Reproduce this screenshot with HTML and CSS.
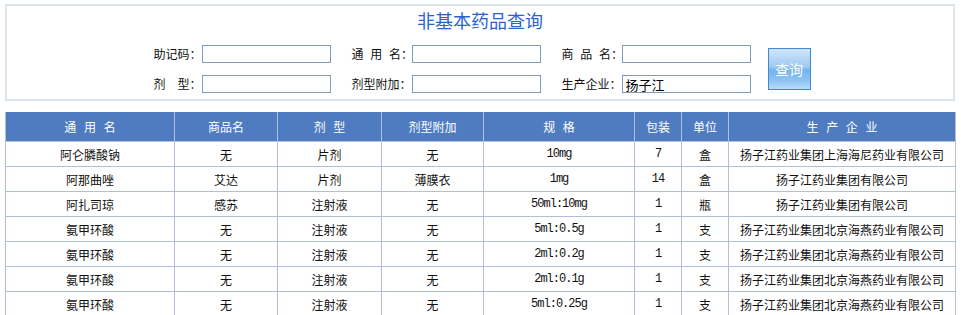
FILE: index.html
```html
<!DOCTYPE html>
<html lang="zh-CN">
<head>
<meta charset="utf-8">
<title>非基本药品查询</title>
<link rel="stylesheet" href="styles.css">
</head>
<body>
<div class="page">
  <div class="search-box">
    <h1 class="title">非基本药品查询</h1>
    <form class="search-form">
      <div class="fields">
        <label class="field"><span class="label">助记码：</span><input class="input" type="text"></label>
        <label class="field"><span class="label spaced">通 用 名：</span><input class="input" type="text"></label>
        <label class="field"><span class="label spaced">商 品 名：</span><input class="input" type="text"></label>
        <label class="field"><span class="label">剂　型：</span><input class="input" type="text"></label>
        <label class="field"><span class="label">剂型附加：</span><input class="input" type="text"></label>
        <label class="field"><span class="label">生产企业：</span><input class="input" type="text" value="扬子江"></label>
      </div>
      <button class="search-btn" type="button">查询</button>
    </form>
  </div>

  <table class="result">
    <colgroup>
      <col class="c1"><col class="c2"><col class="c3"><col class="c4"><col class="c5"><col class="c6"><col class="c7"><col class="c8">
    </colgroup>
    <thead>
      <tr>
        <th class="spaced-h">通 用 名</th>
        <th>商品名</th>
        <th class="spaced-h">剂 型</th>
        <th>剂型附加</th>
        <th class="spaced-h">规 格</th>
        <th>包装</th>
        <th>单位</th>
        <th class="spaced-h">生 产 企 业</th>
      </tr>
    </thead>
    <tbody>
      <tr><td>阿仑膦酸钠</td><td>无</td><td>片剂</td><td>无</td><td class="mono">10mg</td><td class="mono">7</td><td>盒</td><td>扬子江药业集团上海海尼药业有限公司</td></tr>
      <tr><td>阿那曲唑</td><td>艾达</td><td>片剂</td><td>薄膜衣</td><td class="mono">1mg</td><td class="mono">14</td><td>盒</td><td>扬子江药业集团有限公司</td></tr>
      <tr><td>阿扎司琼</td><td>感苏</td><td>注射液</td><td>无</td><td class="mono">50ml:10mg</td><td class="mono">1</td><td>瓶</td><td>扬子江药业集团有限公司</td></tr>
      <tr><td>氨甲环酸</td><td>无</td><td>注射液</td><td>无</td><td class="mono">5ml:0.5g</td><td class="mono">1</td><td>支</td><td>扬子江药业集团北京海燕药业有限公司</td></tr>
      <tr><td>氨甲环酸</td><td>无</td><td>注射液</td><td>无</td><td class="mono">2ml:0.2g</td><td class="mono">1</td><td>支</td><td>扬子江药业集团北京海燕药业有限公司</td></tr>
      <tr><td>氨甲环酸</td><td>无</td><td>注射液</td><td>无</td><td class="mono">2ml:0.1g</td><td class="mono">1</td><td>支</td><td>扬子江药业集团北京海燕药业有限公司</td></tr>
      <tr><td>氨甲环酸</td><td>无</td><td>注射液</td><td>无</td><td class="mono">5ml:0.25g</td><td class="mono">1</td><td>支</td><td>扬子江药业集团北京海燕药业有限公司</td></tr>
    </tbody>
  </table>
</div>
</body>
</html>
```

FILE: styles.css
```css
html, body {
  margin: 0;
  padding: 0;
  background: #ffffff;
}

body {
  font-family: "Noto Sans CJK SC", "Noto Sans", sans-serif;
  font-size: 12px;
  color: #000;
}

.page {
  width: 950px;
  padding: 4px 0 0 5px;
}

.search-box {
  box-sizing: border-box;
  width: 950px;
  height: 97px;
  border: 2px solid #dde3eb;
  padding: 2px 0 0 0;
}

.title {
  margin: 0;
  font-size: 18px;
  font-weight: normal;
  line-height: 24px;
  color: #2a62d2;
  text-align: center;
}

.search-form {
  display: flex;
  align-items: center;
  justify-content: center;
  padding-right: 8px;
  margin-top: 13px;
}

.fields {
  display: grid;
  grid-template-columns: repeat(3, 189px);
  column-gap: 21px;
  row-gap: 12px;
}

.field {
  display: flex;
  align-items: center;
}

.label {
  width: 60px;
  text-align: right;
  line-height: 18px;
  white-space: pre;
  color: #111;
}

.label.spaced {
  word-spacing: 4px;
}

.input {
  box-sizing: border-box;
  width: 129px;
  height: 18px;
  margin: 0;
  padding: 0 3px;
  border: 1px solid #7f9db9;
  background: #fff;
  font-family: "Noto Sans CJK SC", sans-serif;
  font-size: 13px;
  line-height: 16px;
  color: #000;
  outline: none;
}

.search-btn {
  box-sizing: border-box;
  width: 43px;
  height: 42px;
  margin-left: 17px;
  padding: 0;
  border: 1px solid #3f8ad4;
  background: linear-gradient(to bottom, #cfe5fa 0%, #9fcaf2 45%, #74b3ec 52%, #8fc4f2 80%, #b7dcfa 100%);
  color: #fff;
  font-family: "Noto Sans CJK SC", sans-serif;
  font-size: 14px;
  line-height: 20px;
  cursor: pointer;
}

.result {
  margin-top: 11px;
  width: 950px;
  border-collapse: collapse;
  table-layout: fixed;
}

.c1 { width: 169px; }
.c2 { width: 103px; }
.c3 { width: 104px; }
.c4 { width: 102px; }
.c5 { width: 151px; }
.c6 { width: 47px; }
.c7 { width: 47px; }
.c8 { width: 227px; }

.result th,
.result td {
  border: 1px solid #b1bfd9;
  padding: 0;
  text-align: center;
  white-space: nowrap;
  overflow: hidden;
}

.result th {
  height: 29px;
  background: #4f7cc0;
  color: #fff;
  font-weight: normal;
  font-size: 12px;
  border-top: none;
}

.spaced-h {
  word-spacing: 5px;
}

.result td {
  height: 24px;
  color: #111;
}

.result td.mono {
  font-family: "Liberation Mono", monospace;
  font-size: 12px;
  letter-spacing: -1px;
}
```
